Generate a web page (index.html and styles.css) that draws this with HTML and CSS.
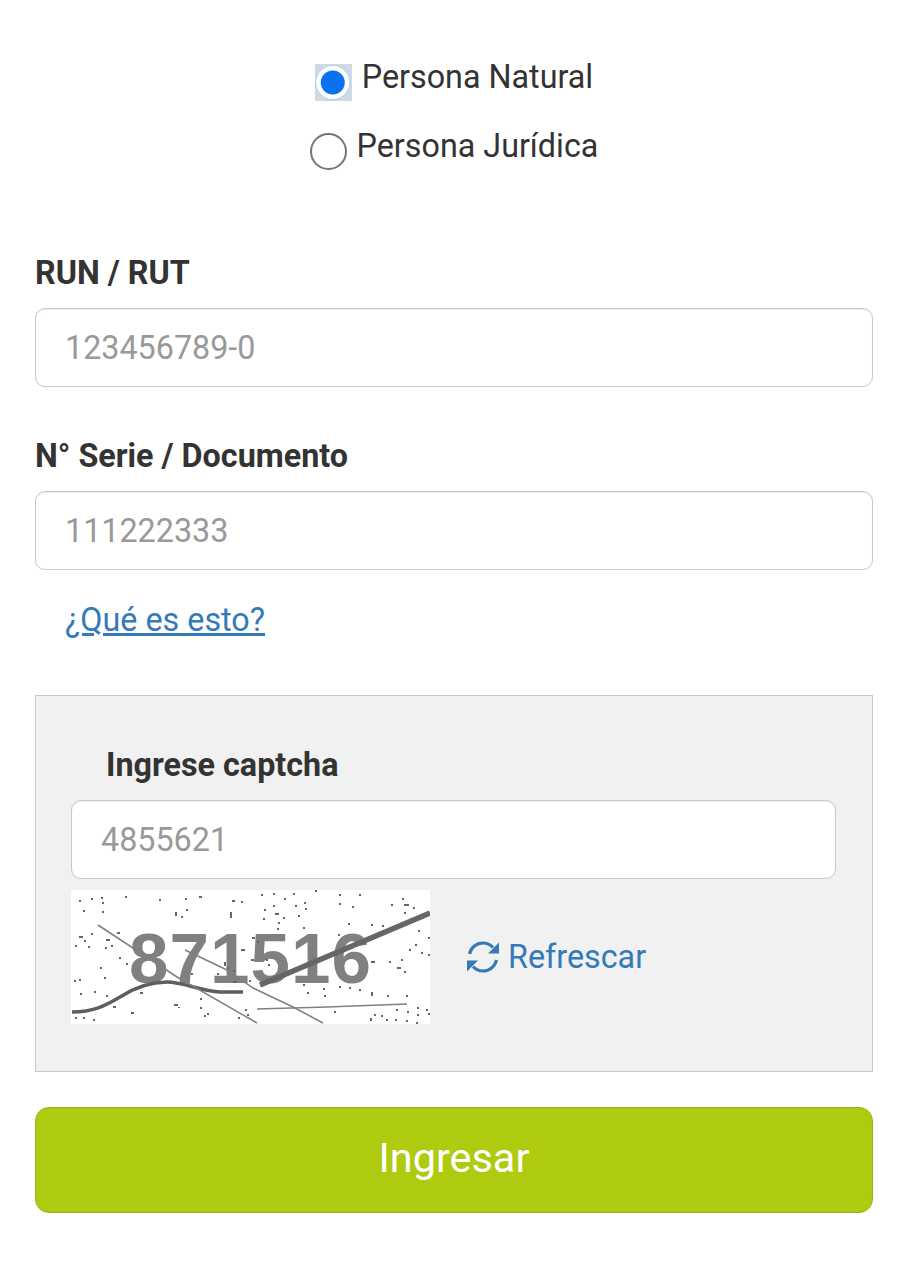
FILE: index.html
```html
<!DOCTYPE html>
<html lang="es">
<head>
  <meta charset="UTF-8" />
  <meta name="viewport" content="width=device-width, initial-scale=1.0"/>
  <title>Ingresar</title>
  <link rel="stylesheet" href="styles.css">
</head>
<body>

<form class="login">
  <!-- Tipo de persona -->
  <div class="person-type">
    <label class="radio-row">
      <input type="radio" name="tipo" class="radio" checked>
      <span>Persona Natural</span>
    </label>
    <label class="radio-row">
      <input type="radio" name="tipo" class="radio">
      <span>Persona Jurídica</span>
    </label>
  </div>

  <div class="field">
    <label class="field-label">RUN / RUT</label>
    <input type="text" class="text-input" placeholder="123456789-0">
  </div>

  <div class="field">
    <label class="field-label">N° Serie / Documento</label>
    <input type="text" class="text-input" placeholder="111222333">
  </div>

  <a href="#" class="help-link">¿Qué es esto?</a>

  <!-- Captcha -->
  <div class="captcha-panel">
    <label class="field-label captcha-label">Ingrese captcha</label>
    <input type="text" class="text-input" placeholder="4855621">
    <div class="captcha-row">
      <svg class="captcha-img" width="359" height="134" viewBox="0 0 359 134">
        <text x="58" y="93" class="captcha-digits">871516</text>
        <path class="captcha-noise" d="M8 11h2M20 9h2M30 8h2M31 13h2M12 21h2M31 22h2M54 7h2M88 10h2M114 9h2M128 7h3M161 11h3M170 12h2M190 5h2M202 4h2M202 16h2M213 9h2M222 4h2M224 16h2M233 13h2M234 19h2M244 1h2M268 5h2M268 14h2M281 17h2M288 5h2M320 15h2M333 15h5M331 9h2M342 18h2M333 23h2M115 20h2M105 22v4M111 26v2M160 22v6M192 29h2M193 20h2M204 24h4M213 27v2M227 26h2M206 39h2M207 33h2M232 38h2M277 34h2M267 45h2M300 35h2M311 36h2M347 41h2M357 48h2M20 44h2M8 47h4M13 51h2M35 50h4M46 43h3M40 56h2M4 56h2M17 57h2M34 58h2M29 78h2M48 68h2M55 74h2M33 88h2M8 90h2M4 90v2M23 102h2M9 104h2M35 106h2M42 117h3M103 115h4M108 117v1M69 103h3M129 109h2M129 118h2M136 124h2M133 126h2M60 123h3M162 92h4M178 91h2M181 48h3M186 52h2M180 70h3M195 70h2M197 75h2M215 82h2M232 95h2M236 103h2M252 99h2M253 106h2M268 97h2M278 98h2M288 100h2M301 102v4M316 106h2M335 106h2M263 122h2M303 125h2M310 126h2M325 120h2M336 122h2M346 125h2M355 120h2M346 118h2M359 124h-2M300 128v3M315 130h2M335 131h2M324 130h2M345 133h2M4 128h2M12 128h2M22 130h2M167 128h2M174 120h2M344 55h2M338 60h2M330 70h2M318 72h2M326 78h4M333 82h2M357 65h2M350 63h2M300 72h4M154 72v4M156 78h2M162 81h2M170 60h4M146 84h2M176 125h2M120 84h2"/>
        <path class="captcha-line thick" d="M189 95L359 23"/>
        <path class="captcha-line curve" d="M1 122C22 122 34 116 49 107C66 96 80 92 96 92C112 92 130 101 149 102H172"/>
        <path class="captcha-line thin" d="M27 35L106 87L186 133"/>
        <path class="captcha-line thin" d="M114 60L156 80L182 98L222 117L252 133"/>
        <path class="captcha-line thin" d="M186 119L256 117L336 114"/>
      </svg>
      <a href="#" class="refresh-link">
        <svg class="refresh-icon" width="34" height="34" viewBox="0 0 34 34">
          <path d="M3.500 14C5 7.500 10.500 3 17 3C21 3 24.500 4.800 27 7.500"/>
          <path class="fill" d="M33 2.500V13.500H22Z"/>
          <path d="M30.500 20C29 26.500 23.500 31 17 31C13 31 9.500 29.200 7 26.500"/>
          <path class="fill" d="M1 31.500V20.500H12Z"/>
        </svg>
        <span>Refrescar</span>
      </a>
    </div>
  </div>

  <button type="button" class="submit-btn">Ingresar</button>
</form>

</body>
</html>
```

FILE: styles.css
```css
* {
  margin: 0;
  padding: 0;
  box-sizing: border-box;
}

body {
  font-family: Roboto, "Liberation Sans", sans-serif;
  font-size: 32.3px;
  line-height: 37px;
  color: #333;
  background-color: #fff;
}

.login {
  display: flex;
  flex-direction: column;
  padding: 59px 34px 0 35px;
}

.person-type {
  display: flex;
  flex-direction: column;
  align-items: center;
  gap: 27px;
  margin-bottom: 85px;
}

.radio-row {
  display: flex;
  align-items: flex-start;
  gap: 10px;
}

.radio {
  appearance: none;
  width: 37px;
  height: 37px;
  margin-top: 5px;
  border: 2.500px solid #767676;
  border-radius: 50%;
  background-color: #fff;
}

.radio:checked {
  border: none;
  border-radius: 0;
  background: radial-gradient(circle at 48% 50%, #0a72f0 0 11.5px, #fff 12.500px 16px, #b9d3ee 17px, #cfdae6 18.500px);
}

.field {
  display: flex;
  flex-direction: column;
  gap: 16px;
  margin-bottom: 51px;
}

.field-label {
  font-weight: 700;
  color: #333;
}

.text-input {
  width: 100%;
  height: 79px;
  padding: 0 29px;
  font-family: inherit;
  font-size: 32.3px;
  color: #333;
  background-color: #fff;
  border: 1.500px solid #c8c8c8;
  border-radius: 10px;
  box-shadow: inset 0 1px 1px rgba(0,0,0,0.075);
}

.text-input::placeholder {
  color: #999;
  opacity: 1;
}

.help-link {
  align-self: flex-start;
  margin-top: -19px;
  margin-left: 30px;
  color: #337ab7;
}

.captcha-panel {
  display: flex;
  flex-direction: column;
  margin-top: 56px;
  padding: 51px 36px 47px 35px;
  background-color: #f1f1f1;
  border: 1.500px solid #c8c8c8;
}

.captcha-label {
  margin: 0 0 16px 35px;
}

.captcha-row {
  display: flex;
  align-items: center;
  gap: 36px;
  margin-top: 11px;
}

.captcha-img {
  display: block;
  flex-shrink: 0;
  background-color: #fff;
  filter: blur(0.5px);
}

.captcha-digits {
  font-family: "Liberation Sans", Arial, sans-serif;
  font-size: 71px;
  font-weight: 700;
  letter-spacing: 1px;
  fill: #808080;
}

.captcha-noise {
  fill: none;
  stroke: #666;
  stroke-width: 2;
}

.captcha-line {
  fill: none;
  stroke: #6e6e6e;
}

.captcha-line.thick {
  stroke-width: 5.500px;
  stroke: #666;
}

.captcha-line.curve {
  stroke-width: 3.500px;
  stroke: #5e5e5e;
}

.captcha-line.thin {
  stroke-width: 1.500px;
  stroke: #808080;
}

.refresh-link {
  display: flex;
  align-items: center;
  gap: 8px;
  color: #337ab7;
  text-decoration: none;
}

.refresh-icon {
  flex-shrink: 0;
  fill: none;
  stroke: #337ab7;
  stroke-width: 3.2;
}

.refresh-icon .fill {
  fill: #337ab7;
  stroke: none;
}

.submit-btn {
  height: 106px;
  margin-top: 35px;
  padding-bottom: 4px;
  font-family: inherit;
  font-size: 41.4px;
  color: #fff;
  background-color: #afcb0f;
  border: 1.500px solid #9aae1f;
  border-radius: 14px;
}
```
